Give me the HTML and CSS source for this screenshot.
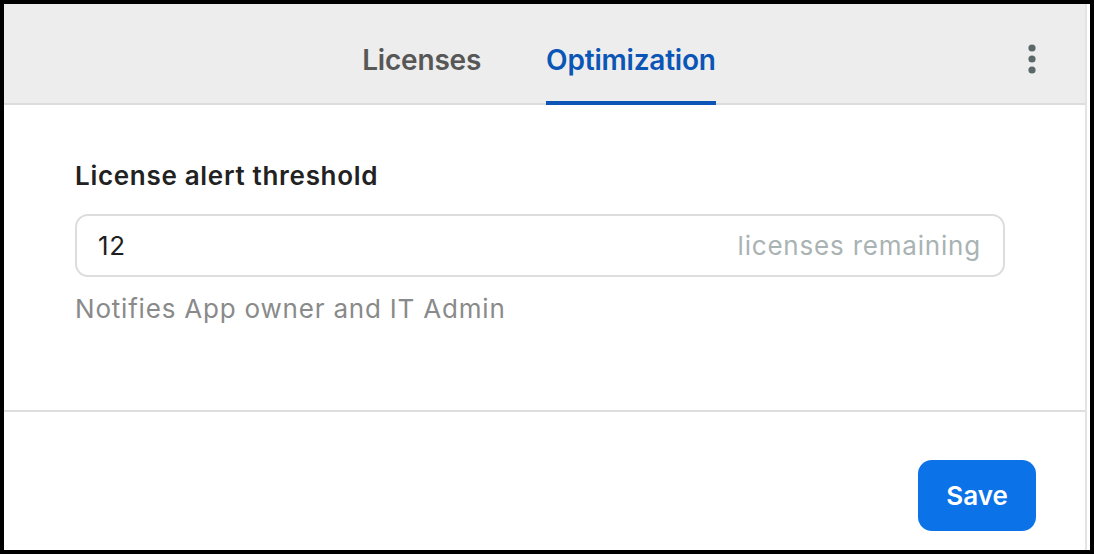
FILE: index.html
```html
<!DOCTYPE html>
<html lang="en">
<head>
    <meta charset="UTF-8">
    <meta name="viewport" content="width=device-width, initial-scale=1.0">
    <title>License settings</title>
    <link rel="stylesheet" href="styles.css">
</head>
<body>
    <div class="panel">
        <div class="main">
            <!-- Tabs -->
            <header class="tabs-bar">
                <nav class="tabs">
                    <a class="tab">Licenses</a>
                    <a class="tab tab-active">Optimization</a>
                </nav>
                <button class="more-btn" aria-label="More">
                    <svg width="8" height="30" viewBox="0 0 8 30">
                        <circle cx="4" cy="4" r="3.6" fill="#5b6868"/>
                        <circle cx="4" cy="15" r="3.6" fill="#5b6868"/>
                        <circle cx="4" cy="26" r="3.6" fill="#5b6868"/>
                    </svg>
                </button>
            </header>

            <!-- Form -->
            <section class="form-body">
                <label class="field-label" for="threshold">License alert threshold</label>
                <div class="field-input">
                    <input id="threshold" type="text" value="12">
                    <span class="field-suffix">licenses remaining</span>
                </div>
                <p class="field-hint">Notifies App owner and IT Admin</p>
            </section>

            <footer class="form-footer">
                <button class="save-btn">Save</button>
            </footer>
        </div>
    </div>
</body>
</html>
```

FILE: styles.css
```css
* {
    margin: 0;
    padding: 0;
    box-sizing: border-box;
    font-family: 'Inter', 'Liberation Sans', sans-serif;
}

body {
    background: #000;
    padding: 4px;
    width: 1094px;
    height: 554px;
    overflow: hidden;
}

.panel {
    width: 1086px;
    height: 546px;
    background: #fff;
    display: flex;
    padding-right: 3px;
}

.main {
    flex: 1;
    display: flex;
    flex-direction: column;
    border-right: 2px solid #e3e3e3;
}

/* Tabs */
.tabs-bar {
    position: relative;
    height: 101px;
    background: #ededed;
    border-bottom: 2px solid #dcdcdc;
    display: flex;
    justify-content: center;
}

.tabs {
    display: flex;
    gap: 65px;
    margin-left: -11px;
}

.tab {
    display: flex;
    align-items: center;
    height: 101px;
    padding-top: 14px;
    font-size: 28px;
    font-weight: 600;
    color: #575757;
    letter-spacing: -0.2px;
    border-bottom: 4px solid transparent;
    margin-bottom: -2px;
}

.tab-active {
    color: #0a55b5;
    border-bottom-color: #0a55b5;
}

.more-btn {
    position: absolute;
    right: 49px;
    top: 40px;
    background: none;
    border: none;
    display: flex;
}

/* Form */
.form-body {
    height: 307px;
    padding: 56px 80px 0 71px;
    border-bottom: 2px solid #dedede;
}

.field-label {
    display: block;
    font-size: 26px;
    font-weight: 600;
    color: #222;
    line-height: 30px;
    letter-spacing: 0.7px;
}

.field-input {
    margin-top: 23px;
    height: 63px;
    border: 2px solid #dddddd;
    border-radius: 13px;
    display: flex;
    align-items: center;
    padding: 0 22px 0 21px;
}

.field-input input {
    flex: 1;
    min-width: 0;
    border: none;
    outline: none;
    font-size: 26px;
    letter-spacing: 0.7px;
    color: #1f1f1f;
    background: transparent;
}

.field-suffix {
    font-size: 26px;
    letter-spacing: 0.8px;
    color: #a9b3b3;
}

.field-hint {
    margin-top: 17px;
    font-size: 26px;
    letter-spacing: 0.8px;
    color: #8a8a8a;
    line-height: 30px;
}

.form-footer {
    flex: 1;
    display: flex;
    justify-content: flex-end;
    padding: 48px 49px 0 0;
}

.save-btn {
    width: 118px;
    height: 71px;
    background: #0b72e8;
    color: #fff;
    border: none;
    border-radius: 14px;
    font-size: 26px;
    font-weight: 600;
}
```
